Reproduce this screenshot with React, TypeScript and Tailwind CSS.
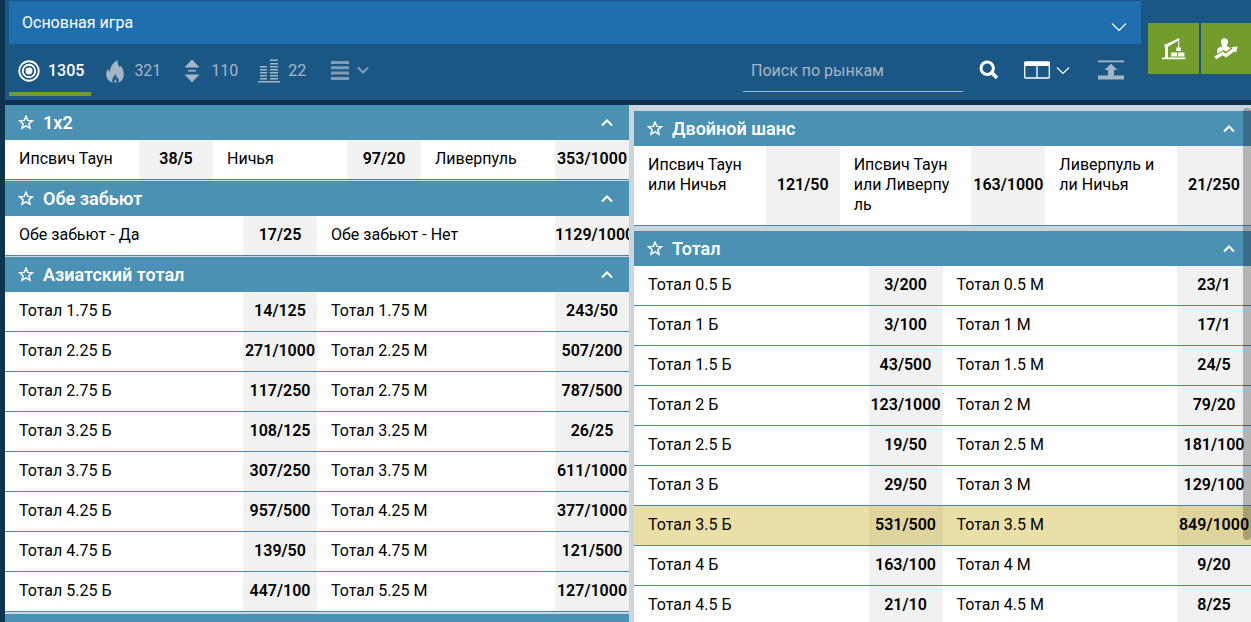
import React from "react";

type Bet = { name: string; odd: string; marked?: boolean };
type Market = { title: string; cols: 2 | 3; bets: Bet[] };

const b = (name: string, odd: string, marked = false): Bet => ({ name, odd, marked });

const leftMarkets: Market[] = [
  {
    title: "1x2",
    cols: 3,
    bets: [b("Ипсвич Таун", "38/5"), b("Ничья", "97/20"), b("Ливерпуль", "353/1000")],
  },
  {
    title: "Обе забьют",
    cols: 2,
    bets: [b("Обе забьют - Да", "17/25"), b("Обе забьют - Нет", "1129/1000")],
  },
  {
    title: "Азиатский тотал",
    cols: 2,
    bets: [
      b("Тотал 1.75 Б", "14/125"), b("Тотал 1.75 М", "243/50"),
      b("Тотал 2.25 Б", "271/1000"), b("Тотал 2.25 М", "507/200"),
      b("Тотал 2.75 Б", "117/250"), b("Тотал 2.75 М", "787/500"),
      b("Тотал 3.25 Б", "108/125"), b("Тотал 3.25 М", "26/25"),
      b("Тотал 3.75 Б", "307/250"), b("Тотал 3.75 М", "611/1000"),
      b("Тотал 4.25 Б", "957/500"), b("Тотал 4.25 М", "377/1000"),
      b("Тотал 4.75 Б", "139/50"), b("Тотал 4.75 М", "121/500"),
      b("Тотал 5.25 Б", "447/100"), b("Тотал 5.25 М", "127/1000"),
    ],
  },
];

const rightMarkets: Market[] = [
  {
    title: "Двойной шанс",
    cols: 3,
    bets: [
      b("Ипсвич Таун или Ничья", "121/50"),
      b("Ипсвич Таун или Ливерпуль", "163/1000"),
      b("Ливерпуль или Ничья", "21/250"),
    ],
  },
  {
    title: "Тотал",
    cols: 2,
    bets: [
      b("Тотал 0.5 Б", "3/200"), b("Тотал 0.5 М", "23/1"),
      b("Тотал 1 Б", "3/100"), b("Тотал 1 М", "17/1"),
      b("Тотал 1.5 Б", "43/500"), b("Тотал 1.5 М", "24/5"),
      b("Тотал 2 Б", "123/1000"), b("Тотал 2 М", "79/20"),
      b("Тотал 2.5 Б", "19/50"), b("Тотал 2.5 М", "181/100"),
      b("Тотал 3 Б", "29/50"), b("Тотал 3 М", "129/100"),
      b("Тотал 3.5 Б", "531/500", true), b("Тотал 3.5 М", "849/1000", true),
      b("Тотал 4 Б", "163/100"), b("Тотал 4 М", "9/20"),
      b("Тотал 4.5 Б", "21/10"), b("Тотал 4.5 М", "8/25"),
    ],
  },
];

function Chevron({ up = false, w = 12, stroke = 2 }: { up?: boolean; w?: number; stroke?: number }) {
  const h = Math.round(w / 2) + 2;
  const d = up ? `M1 ${h - 1.5}L${w / 2} 1.5L${w - 1} ${h - 1.5}` : `M1 1.5L${w / 2} ${h - 1.5}L${w - 1} 1.5`;
  return (
    <svg width={w} height={h} viewBox={`0 0 ${w} ${h}`} fill="none" stroke="currentColor" strokeWidth={stroke} aria-hidden="true">
      <path d={d} />
    </svg>
  );
}

function Star() {
  return (
    <svg width="16" height="16" viewBox="0 0 16 16" fill="none" stroke="currentColor" strokeWidth="1.5" aria-hidden="true">
      <path d="M8 1.2L9.8 5.4L14.4 5.8L10.9 8.8L12 13.3L8 10.9L4 13.3L5.1 8.8L1.6 5.8L6.2 5.4Z" />
    </svg>
  );
}

function TargetIcon() {
  return (
    <svg width="24" height="24" viewBox="0 0 24 24" fill="none" stroke="currentColor" aria-hidden="true">
      <circle cx="12" cy="12" r="10.6" strokeWidth="2" />
      <circle cx="12" cy="12" r="6.8" strokeWidth="2" />
      <circle cx="12" cy="12" r="3.8" fill="currentColor" stroke="none" />
    </svg>
  );
}

function FlameIcon() {
  return (
    <svg width="18" height="23" viewBox="0 0 18 23" fill="currentColor" aria-hidden="true">
      <path d="M11.4 0C11.3 3.4 12.4 5.3 13.9 7.4C14.3 6.9 14.5 6.3 14.6 5.6C16.5 8 17.8 11 17.8 14.4C17.8 18.3 15.6 21.4 12.1 22.8C13 21.2 13 19.3 12 17.6C11.6 18.2 11.3 18.6 10.8 18.8C11.1 17 10.4 15.3 9 14.2C9 16 6.2 17.4 6.2 20.2C6.2 21.2 6.5 22.1 7 22.8C3 21.9 .2 18.7 .2 14.6C.2 12.3 1 10.3 2.3 8.7C2.5 10 2.9 10.9 3.7 11.7C4.5 6.6 7 2.5 11.4 0Z" />
      <path d="M9.5 18.3C9.5 20 10.8 20.4 10.3 22.2C10 23 9 23.1 8.4 22.4C7.6 21.2 9.5 20.2 9.5 18.3Z" />
    </svg>
  );
}

function SplitIcon() {
  return (
    <svg width="16" height="24" viewBox="0 0 16 24" fill="currentColor" aria-hidden="true">
      <path d="M8 .5L15.5 8.5H.5ZM8 23.5L.5 15.5H15.5ZM4 11h8v1.6H4Z" />
    </svg>
  );
}

function StacksIcon() {
  return (
    <svg width="22" height="24" viewBox="0 0 22 24" fill="currentColor" aria-hidden="true">
      <path d="M0 22h22v1.6H0ZM2 7h7v1.6H2ZM2 10h7v1.6H2ZM2 13h7v1.6H2ZM2 16h7v1.6H2ZM2 19h7v1.6H2ZM12 .5h8v1.6h-8ZM12 4h8v1.6h-8ZM12 7h8v1.6h-8ZM12 10h8v1.6h-8ZM12 13h8v1.6h-8ZM12 16h8v1.6h-8ZM12 19h8v1.6h-8Z" />
    </svg>
  );
}

function CraneIcon() {
  return (
    <svg width="24" height="22" viewBox="0 0 24 22" fill="currentColor" aria-hidden="true">
      <path d="M0 19.4h23.5v1.8H0ZM3.2 8.5h2.8v11H3.2ZM2.2 6.5L5.6 5.4 17.2 0V2L6.4 8.6 2.8 9.4ZM16.2 1h1v9h-1ZM14.3 9.4h4.6v3.6h-4.6ZM9 14.4h6.2v4.2H9ZM16.2 14.4h6.2v4.2h-6.2Z" />
    </svg>
  );
}

function GrowthIcon() {
  return (
    <svg width="24" height="22" viewBox="0 0 24 22" aria-hidden="true">
      <path fill="currentColor" d="M10.5 .3C13 .3 14.3 2 14 4.3C13.8 6 13.2 7 12.6 7.6C13 9 15.8 9.2 16.4 10.4L12.4 13.4L9.4 12L3.4 15.4C2.8 12 3.2 10 5.6 9.3C7.2 8.9 8.2 8.6 8.4 7.6C7.6 7 7.2 6 7 4.3C6.7 2 8 .3 10.5 .3Z" />
      <path fill="currentColor" d="M.3 18.6L8.6 13.4L11.8 15.4L18.6 10.5L17 9.2L23.6 8.6L22 14.8L20.6 13.2L12 19.4L8.8 17.2L2 21.3Z" />
    </svg>
  );
}

function LayoutIcon() {
  return (
    <svg width="26" height="18" viewBox="0 0 26 18" fill="none" stroke="currentColor" strokeWidth="1.3" aria-hidden="true">
      <rect x=".7" y="1" width="24.6" height="16" rx="1" />
      <path d="M13 4V17" />
      <path d="M0 3H26" strokeWidth="4" />
    </svg>
  );
}

function CollapseIcon() {
  return (
    <svg width="26" height="20" viewBox="0 0 26 20" fill="currentColor" aria-hidden="true">
      <path d="M0 .5h26v1.8H0ZM0 15.5h26v4H0ZM13 3.8L19.4 10H16v6.5h-6V10H6.6Z" />
    </svg>
  );
}

function SearchIcon() {
  return (
    <svg width="20" height="20" viewBox="0 0 20 20" fill="none" stroke="currentColor" aria-hidden="true">
      <circle cx="8.2" cy="8.2" r="6.2" strokeWidth="3" />
      <path d="M12.8 12.8L18 18" strokeWidth="3.6" />
    </svg>
  );
}

function Tab({ icon, count, active = false }: { icon: React.ReactNode; count: string; active?: boolean }) {
  return (
    <button
      type="button"
      className={
        "flex h-full items-center gap-2 border-b-4 pt-1.5 pr-[7px] pl-[9px] text-base " +
        (active ? "border-[#729d2d] font-medium text-white" : "border-transparent text-[#a4b6c5]")
      }
    >
      <span className="flex w-[22px] justify-center">{icon}</span>
      {count}
    </button>
  );
}

function MarketBlock({ market }: { market: Market }) {
  return (
    <section>
      <header className="flex h-[35px] items-center bg-[#4b91b4] pr-4 pl-[13px] text-white">
        <button type="button" aria-label="В избранное">
          <Star />
        </button>
        <h2 className="ml-[9px] flex-1 text-lg leading-6 font-semibold">{market.title}</h2>
        <button type="button" aria-label="Свернуть">
          <Chevron up />
        </button>
      </header>
      <div className={"grid " + (market.cols === 3 ? "grid-cols-3" : "grid-cols-2")}>
        {market.bets.map((bet) => (
          <div
            key={bet.name}
            className={"flex min-w-0 border-b border-[#4a86b4] " + (bet.marked ? "bg-[#ebdfa8]" : "bg-white")}
          >
            <span className="min-w-0 flex-1 pt-[9px] pr-4 pb-2.5 pl-3.5 leading-5 break-all">
              {bet.name}
            </span>
            <button
              type="button"
              className={
                "w-[74px] shrink-0 overflow-hidden pb-px text-center font-semibold whitespace-nowrap " +
                (bet.marked ? "bg-[#dfd49c]" : "bg-[#f1f1f1]")
              }
            >
              {bet.odd}
            </button>
          </div>
        ))}
      </div>
    </section>
  );
}

export default function App() {
  return (
    <div className="flex h-screen flex-col overflow-hidden bg-[#0d3350] pl-[5px] font-[Roboto,sans-serif] text-base text-black">
      <div className="flex shrink-0 bg-[#1b5785] pt-px pl-1">
        <div className="min-w-0 flex-1">
          <button
            type="button"
            className="flex h-[43px] w-full items-center justify-between bg-[#1f6fae] pr-3.5 pl-[13px] text-white"
          >
            <span>Основная игра</span>
            <span className="pt-2">
              <Chevron w={16} stroke={1.2} />
            </span>
          </button>
          <div className="flex h-14 items-center pr-[17px] pb-1">
            <nav className="flex h-full items-center gap-1">
              <Tab active icon={<TargetIcon />} count="1305" />
              <Tab icon={<FlameIcon />} count="321" />
              <Tab icon={<SplitIcon />} count="110" />
              <Tab icon={<StacksIcon />} count="22" />
            </nav>
            <button type="button" aria-label="Список" className="ml-[18px] flex items-center gap-2 text-[#7f9db6]">
              <svg width="18" height="19" viewBox="0 0 18 19" fill="currentColor" aria-hidden="true">
                <path d="M0 0h18v3H0ZM0 5.3h18v3H0ZM0 10.6h18v3H0ZM0 16h18v3H0Z" />
              </svg>
              <Chevron />
            </button>
            <input
              type="text"
              aria-label="Поиск по рынкам"
              placeholder="Поиск по рынкам"
              className="ml-auto h-[44px] w-[220px] border-b border-[#a4b6c5] bg-transparent px-2 pt-0.5 text-white outline-none placeholder:text-[#a4b6c5]"
            />
            <button type="button" aria-label="Найти" className="ml-4 text-white">
              <SearchIcon />
            </button>
            <button type="button" aria-label="Колонки" className="ml-[25px] flex items-center gap-1.5 text-white">
              <LayoutIcon />
              <Chevron w={14} stroke={1.2} />
            </button>
            <button type="button" aria-label="Свернуть все" className="ml-7 text-[#a4b6c5]">
              <CollapseIcon />
            </button>
          </div>
        </div>
        <div className="flex gap-0.5 pt-[22px] pl-[7px] text-white">
          <button type="button" aria-label="Конструктор" className="flex h-[51px] w-[51px] items-center justify-center bg-[#729d2d]">
            <CraneIcon />
          </button>
          <button type="button" aria-label="Прогноз" className="flex h-[51px] w-[50px] items-center justify-center bg-[#729d2d]">
            <GrowthIcon />
          </button>
        </div>
      </div>
      <main className="mt-[5px] grid min-h-0 flex-1 grid-cols-[624fr_617fr] gap-[5px] overflow-hidden bg-[#cdd5dc]">
        <div className="flex min-w-0 flex-col gap-px">
          {leftMarkets.map((m) => (
            <MarketBlock key={m.title} market={m} />
          ))}
          <div className="mt-px h-[35px] shrink-0 bg-[#4b91b4]" />
        </div>
        <div className="relative flex min-w-0 flex-col gap-[5px] pt-1.5">
          {rightMarkets.map((m) => (
            <MarketBlock key={m.title} market={m} />
          ))}
          <div className="absolute top-[3px] right-0 h-[432px] w-2 rounded bg-black/25" />
        </div>
      </main>
    </div>
  );
}
